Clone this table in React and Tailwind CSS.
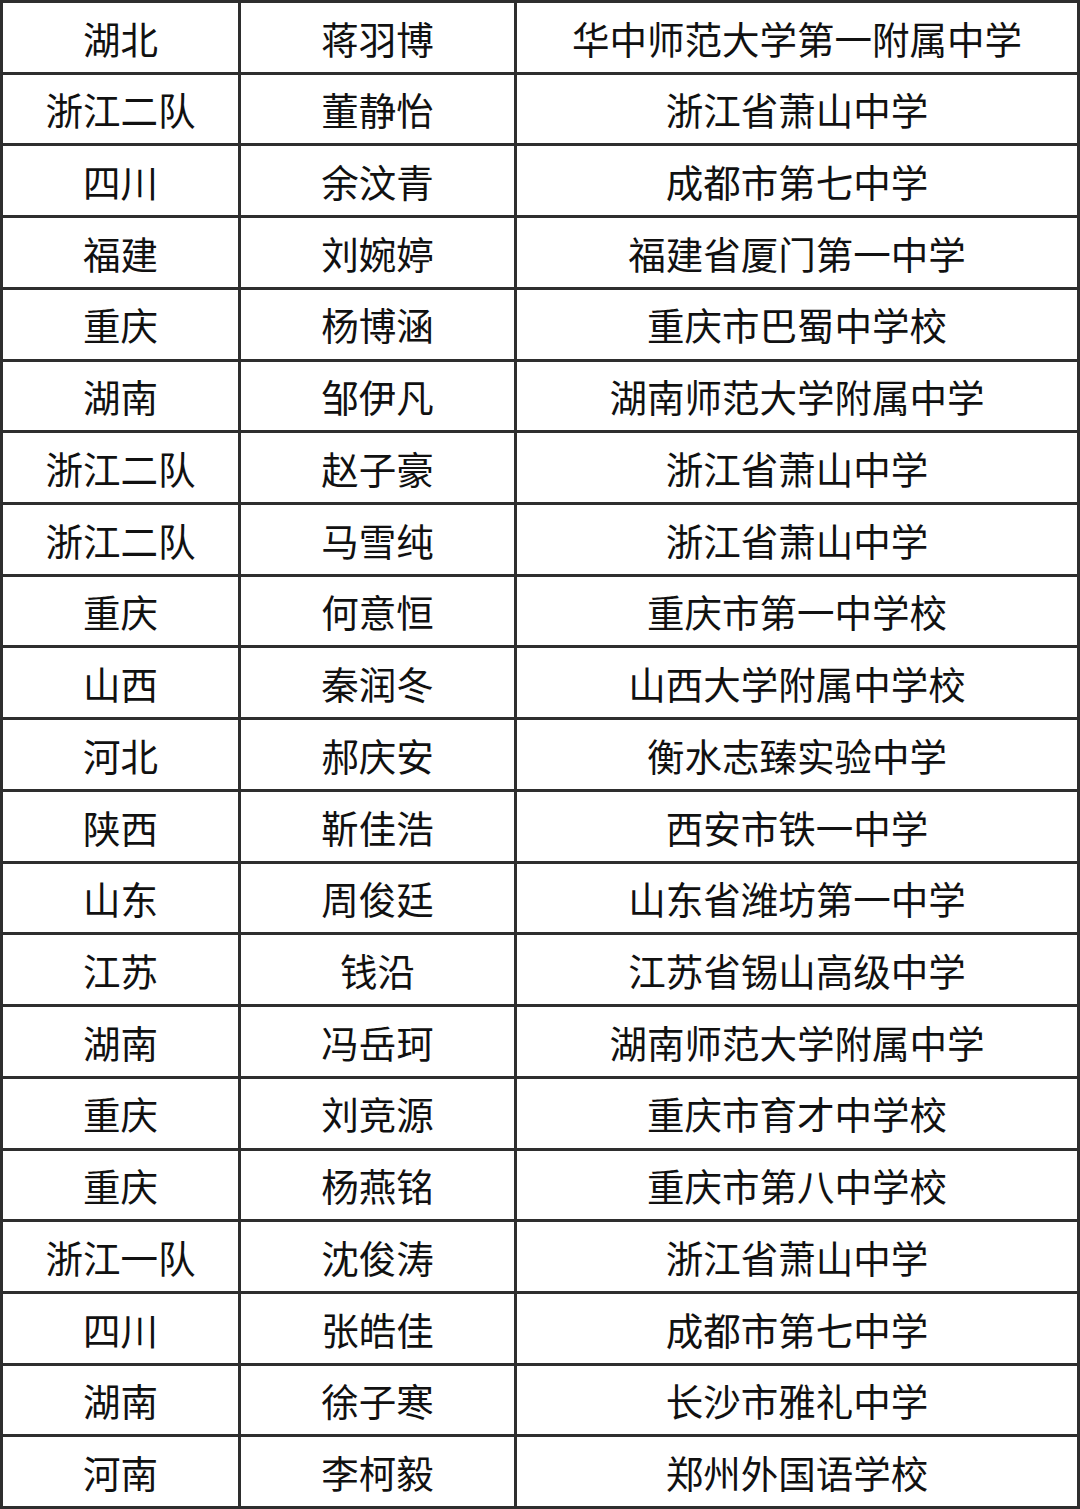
const rows = [
  ['湖北', '蒋羽博', '华中师范大学第一附属中学'],
  ['浙江二队', '董静怡', '浙江省萧山中学'],
  ['四川', '余汶青', '成都市第七中学'],
  ['福建', '刘婉婷', '福建省厦门第一中学'],
  ['重庆', '杨博涵', '重庆市巴蜀中学校'],
  ['湖南', '邹伊凡', '湖南师范大学附属中学'],
  ['浙江二队', '赵子豪', '浙江省萧山中学'],
  ['浙江二队', '马雪纯', '浙江省萧山中学'],
  ['重庆', '何意恒', '重庆市第一中学校'],
  ['山西', '秦润冬', '山西大学附属中学校'],
  ['河北', '郝庆安', '衡水志臻实验中学'],
  ['陕西', '靳佳浩', '西安市铁一中学'],
  ['山东', '周俊廷', '山东省潍坊第一中学'],
  ['江苏', '钱沿', '江苏省锡山高级中学'],
  ['湖南', '冯岳珂', '湖南师范大学附属中学'],
  ['重庆', '刘竞源', '重庆市育才中学校'],
  ['重庆', '杨燕铭', '重庆市第八中学校'],
  ['浙江一队', '沈俊涛', '浙江省萧山中学'],
  ['四川', '张皓佳', '成都市第七中学'],
  ['湖南', '徐子寒', '长沙市雅礼中学'],
  ['河南', '李柯毅', '郑州外国语学校'],
]

export default function App() {
  return (
    <div
      className="w-[1080px] h-[1509px] bg-white border-[3px] border-[#2e2e2e] flex flex-col text-[37.5px] text-[#111]"
      style={{ fontFamily: '"Noto Sans CJK SC", "Noto Sans", sans-serif' }}
    >
      {rows.map((row, i) => (
        <div
          key={i}
          className={'flex flex-1 basis-0 ' + (i > 0 ? 'border-t-[3px] border-[#2e2e2e]' : '')}
        >
          <div className="w-[235px] shrink-0 flex items-center justify-center leading-none">{row[0]}</div>
          <div className="w-[276px] shrink-0 border-l-[3px] border-[#2e2e2e] flex items-center justify-center leading-none">{row[1]}</div>
          <div className="flex-1 border-l-[3px] border-[#2e2e2e] flex items-center justify-center leading-none">{row[2]}</div>
        </div>
      ))}
    </div>
  )
}
